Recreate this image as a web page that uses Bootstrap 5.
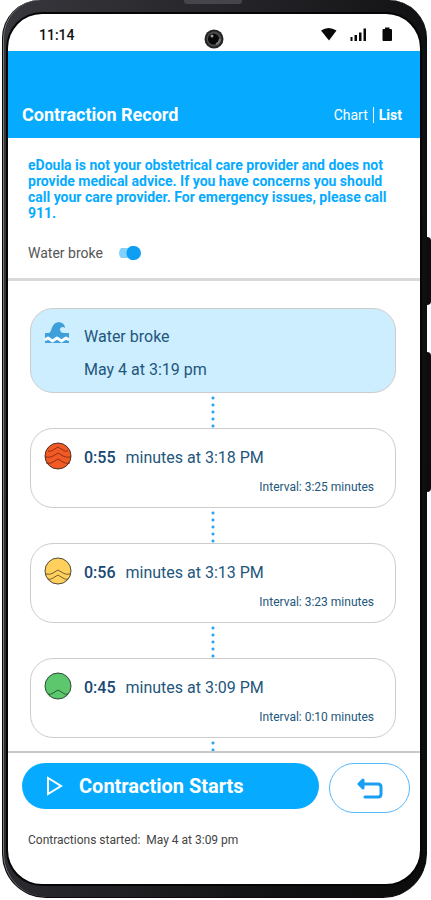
<!DOCTYPE html>
<html lang="en">
<head>
<meta charset="utf-8">
<meta name="viewport" content="width=device-width, initial-scale=1">
<title>Contraction Record</title>
<link href="https://cdn.jsdelivr.net/npm/bootstrap@5.3.0/dist/css/bootstrap.min.css" rel="stylesheet">
<style>
  :root { --sky: #06abff; --navy: #23567c; }
  body { font-family: Roboto, "Liberation Sans", sans-serif; color: #555; background: #fff; }
  .stage { min-height: 100vh; padding: 0 4px 2px 2px; }
  .phone {
    padding: 14px 6px 13px 5px;
    background: linear-gradient(100deg, #38373d 0%, #222226 45%, #111113 75%, #0c0c0d 100%);
    border: solid #0b0b0c; border-width: 0 1px 1px;
    border-radius: 38px 38px 44px 44px;
    box-shadow: inset 1px 0 0 #77777b;
  }
  .screen { background: #fff; border-radius: 34px; box-shadow: 0 0 0 2px #050505; overflow: hidden; }
  .speaker { top: 0; left: 184px; width: 58px; height: 4px; background: #45454b; border-radius: 0 0 3px 3px; }
  .side-key { right: 0; width: 5px; background: #0d0d0e; border-radius: 0 4px 4px 0; }
  .volume { top: 352px; height: 140px; }
  .power { top: 237px; height: 68px; }
  .status-bar { height: 37px; padding: 4px 27px 0 31px; color: #111; }
  .clock { font-size: 14px; font-weight: 500; line-height: 20px; }
  .camera { top: 29px; left: 204px; }
  .app-bar { height: 87px; padding: 0 18px 11px 14px; background: var(--sky); }
  .app-bar h1 { font-size: 18px; line-height: 24px; font-weight: 700; }
  .views { font-size: 14px; line-height: 24px; gap: 5px; }
  .views a { color: #fff; }
  .views .view-rule { width: 1px; height: 16px; background: #fff; }
  .notice { padding: 19px 20px 0; color: var(--sky); font-size: 14px; line-height: 16px; font-weight: 700; }
  .water-row { padding: 20px 20px 13px; border-bottom: 3px solid #d9d9d9; font-size: 14px; line-height: 24px; }
  .water-row .form-check-input {
    width: 22px; height: 14px; margin: 0; border: 0; box-shadow: none;
    background: radial-gradient(circle at 15px 7px, #0e9ff5 7px, transparent 8px), linear-gradient(#83d0fb, #83d0fb) 0 2px / 18px 10px no-repeat;
    border-radius: 7px;
  }
  .timeline { padding: 27px 24px 0 22px; color: var(--navy); }
  .entry { border: 1px solid #ccc; border-radius: 23px; padding: 13px 21px 0 13px; height: 80px; font-size: 16px; line-height: 24px; }
  .entry svg { flex: none; width: 28px; height: 28px; overflow: visible; }
  .entry strong { color: #174873; font-weight: 500; margin-right: 6px; }
  .entry-water { background: #cdeeff; height: 85px; padding-top: 16px; }
  .entry-water .when { margin-top: 9px; }
  .interval { font-size: 12px; line-height: 18px; margin-top: 8px; }
  .link-dots { height: 35px; width: 4px; background: radial-gradient(circle at 2px 2px, #2ba5f5 1px, transparent 2px) 0 3px / 4px 7px repeat-y; }
  .link-end { height: 13px; }
  .footer { border-top: 2px solid #c8c8c8; padding: 10px 10px 0 14px; }
  .start-btn, .start-btn:hover { height: 46px; background: var(--sky); color: #fff; font-size: 20px; line-height: 24px; font-weight: 700; padding: 0 24px; border: 0; }
  .undo-btn { width: 81px; height: 50px; border: 1px solid #55b9fb; margin-left: 10px; }
  .started { padding: 17px 6px 0; color: #444; font-size: 12px; line-height: 20px; }
</style>
<script src="https://cdn.jsdelivr.net/npm/bootstrap@5.3.0/dist/js/bootstrap.bundle.min.js"></script>
</head>
<body>
<div class="stage position-relative d-flex">
  <div class="side-key power position-absolute"></div>
  <div class="side-key volume position-absolute"></div>
  <div class="phone flex-grow-1 d-flex">
    <div class="speaker position-absolute"></div>
    <div class="screen flex-grow-1 d-flex flex-column">
      <div class="status-bar d-flex align-items-center justify-content-between">
        <span class="clock">11:14</span>
        <svg class="camera position-absolute" width="20" height="20" viewBox="0 0 20 20" aria-hidden="true">
          <circle cx="10" cy="10" r="9.5" fill="#242424"/><circle cx="10" cy="10" r="7.5" fill="#4b4b4b"/>
          <circle cx="9.500" cy="10" r="5.500" fill="#080808"/><path d="M12 15a6 6 0 0 0 4-5" stroke="#777" stroke-width="2" fill="none"/>
          <circle cx="8" cy="7" r="1.500" fill="#999"/>
        </svg>
        <svg width="72" height="15" viewBox="0 0 72 15" aria-hidden="true" fill="#080808">
          <path d="M0 3.500Q7.500-1.500 15.500 3.500L8 13.500Z"/>
          <path d="M29.500 10h2v4h-2zM33.500 8h2.500v6h-2.500zM38 5.500h2.500V14H38zM42.500 1.500H45V14h-2.500z"/>
          <path d="M61.500 3q0-1 1-1h1.500V.5h4.500V2H70q1 0 1 1v10q0 1-1 1h-7.500q-1 0-1-1z"/>
        </svg>
      </div>

      <header class="app-bar d-flex align-items-end justify-content-between text-white">
        <h1 class="m-0">Contraction Record</h1>
        <nav class="views d-flex align-items-center" aria-label="View">
          <a href="#chart" class="text-decoration-none">Chart</a>
          <span class="view-rule"></span>
          <a href="#list" class="text-decoration-none fw-bold" aria-current="page">List</a>
        </nav>
      </header>

      <p class="notice m-0">eDoula is not your obstetrical care provider and does not provide medical advice. If you have concerns you should call your care provider. For emergency issues, please call 911.</p>

      <div class="water-row d-flex align-items-center gap-3">
        <label for="water">Water broke</label>
        <input class="form-check-input" type="checkbox" role="switch" id="water" checked>
      </div>

      <main class="timeline d-flex flex-column">
        <article class="entry entry-water d-flex">
          <svg viewBox="0 0 28 28" aria-hidden="true">
            <path fill="#3f9fdb" d="M1 8h4C8 7 7-1 13-2.500c4.500-1 8 1.500 8 5.500-2-2-5-1-5 1.500 0 2.500 2 3.500 4 3.500h5v10H1z"/>
            <path d="M1 15l3-2 4.500 3 4.500-3 4.500 3 4.500-3 3 2" fill="none" stroke="#f4fbff" stroke-width="3" stroke-linejoin="round"/>
          </svg>
          <div class="ms-2 ps-1"><div>Water broke</div><div class="when">May 4 at 3:19 pm</div></div>
        </article>
        <div class="link-dots align-self-center"></div>

        <article class="entry">
          <div class="d-flex align-items-end">
            <svg viewBox="0 0 28 28" aria-hidden="true">
              <circle cx="14" cy="14" r="13" fill="#f15a24"/>
              <path d="M4 9q3 1 5-1l5-3 5 3q2 2 5 1M1 15q5 1 8-1l5-3 5 3q3 2 8 1M2 21q5 1 7-1l5-3 5 3q2 2 7 1" fill="none" stroke="#913016"/>
              <circle cx="14" cy="14" r="13" fill="none" stroke="#4f3027"/>
            </svg>
            <span class="ms-2 ps-1"><strong>0:55</strong> minutes at 3:18 PM</span>
          </div>
          <div class="interval text-end">Interval: 3:25 minutes</div>
        </article>
        <div class="link-dots align-self-center"></div>

        <article class="entry">
          <div class="d-flex align-items-end">
            <svg viewBox="0 0 28 28" aria-hidden="true">
              <circle cx="14" cy="14" r="13" fill="#ffd05b"/>
              <path d="M2 17q4 1 7-1l5-3 5 3q3 2 7 1M4 22q3 1 5-1l5-3 5 3q2 2 5 1" fill="none" stroke="#71602f"/>
              <circle cx="14" cy="14" r="13" fill="none" stroke="#514a39"/>
            </svg>
            <span class="ms-2 ps-1"><strong>0:56</strong> minutes at 3:13 PM</span>
          </div>
          <div class="interval text-end">Interval: 3:23 minutes</div>
        </article>
        <div class="link-dots align-self-center"></div>

        <article class="entry">
          <div class="d-flex align-items-end">
            <svg viewBox="0 0 28 28" aria-hidden="true">
              <circle cx="14" cy="14" r="13" fill="#5cc76c"/>
              <path d="M4 22q3 1 5-1l5-3 5 3q2 2 5 1" fill="none" stroke="#265d35"/>
              <circle cx="14" cy="14" r="13" fill="none" stroke="#2f4b38"/>
            </svg>
            <span class="ms-2 ps-1"><strong>0:45</strong> minutes at 3:09 PM</span>
          </div>
          <div class="interval text-end">Interval: 0:10 minutes</div>
        </article>
        <div class="link-dots link-end align-self-center"></div>
      </main>

      <footer class="footer flex-grow-1">
        <div class="d-flex align-items-start">
          <button type="button" class="start-btn btn rounded-pill flex-grow-1 d-flex align-items-center">
            <svg class="me-3" width="17" height="20" viewBox="0 0 17 20" fill="none" stroke="#fff" stroke-width="2" aria-hidden="true"><path d="M2 2v16l13-8z"/></svg>
            Contraction Starts
          </button>
          <button type="button" class="undo-btn btn rounded-pill bg-white p-0" aria-label="Undo">
            <svg width="26" height="22" viewBox="0 0 26 22" fill="none" stroke="#189ff4" stroke-width="3" stroke-linecap="round" stroke-linejoin="round" aria-hidden="true"><path d="M3 6h18q3 0 3 3v7q0 3-3 3H8"/><path d="M6 2 2 6l4 4z" fill="#189ff4"/></svg>
          </button>
        </div>
        <div class="started">Contractions started:&nbsp; May 4 at 3:09 pm</div>
      </footer>
    </div>
  </div>
</div>
</body>
</html>
